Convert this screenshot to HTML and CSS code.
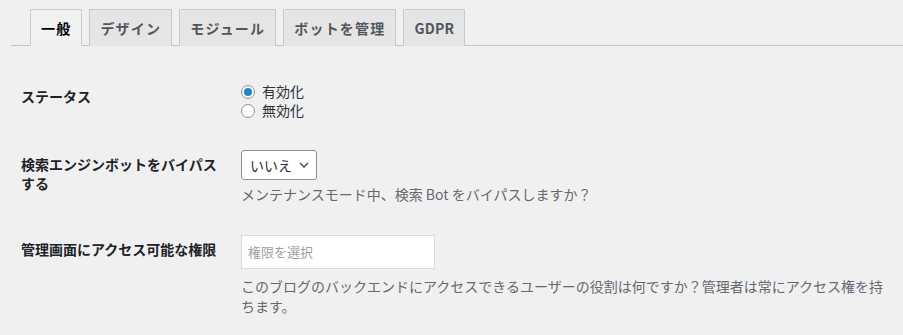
FILE: index.html
```html
<!DOCTYPE html>
<html>
  <head>
    <meta charset="utf-8">
    <title>メンテナンス設定</title>
    <link rel="stylesheet" href="styles.css">
  </head>

  <body>
    <nav class="nav-tab-wrapper">
      <a class="nav-tab nav-tab-active" href="#">一般</a>
      <a class="nav-tab" href="#">デザイン</a>
      <a class="nav-tab" href="#">モジュール</a>
      <a class="nav-tab" href="#">ボットを管理</a>
      <a class="nav-tab nav-tab-latin" href="#">GDPR</a>
    </nav>

    <table class="form-table">
      <tr>
        <th>ステータス</th>
        <td>
          <label class="radio-row"><span class="radio checked"></span>有効化</label>
          <label class="radio-row"><span class="radio"></span>無効化</label>
        </td>
      </tr>
      <tr>
        <th>検索エンジンボットをバイパスする</th>
        <td>
          <div class="select">
            <span>いいえ</span>
            <svg width="10" height="6" viewBox="0 0 10 6"><path d="M1 1l4 4 4-4" fill="none" stroke="#50575e" stroke-width="1.6"/></svg>
          </div>
          <p class="description">メンテナンスモード中、検索 Bot をバイパスしますか？</p>
        </td>
      </tr>
      <tr>
        <th>管理画面にアクセス可能な権限</th>
        <td>
          <div class="role-input">権限を選択</div>
          <p class="description desc-wide">このブログのバックエンドにアクセスできるユーザーの役割は何ですか？管理者は常にアクセス権を持ちます。</p>
        </td>
      </tr>
    </table>
  </body>

</html>
```

FILE: styles.css
```css
body {
  margin: 0;
  background-color: #f0f0f1;
  color: #1d2327;
  font-family: "Noto Sans CJK JP", "Noto Sans", sans-serif;
  font-size: 14px;
}

.nav-tab-wrapper {
  display: flex;
  margin-left: 11px;
  padding: 9px 0 0 12px;
  border-bottom: 1px solid #c3c4c7;
}

.nav-tab {
  margin-left: 7px;
  margin-bottom: -1px;
  padding: 6px 10px;
  line-height: 24px;
  font-size: 14px;
  font-weight: 700;
  letter-spacing: 1.2px;
  color: #50575e;
  text-decoration: none;
  background: #e5e5e5;
  border: 1px solid #c9c9c9;
  border-bottom: none;
}

.nav-tab-latin {
  letter-spacing: 0.2px;
}

.nav-tab-active {
  background: #f1f1f1;
  color: #000;
  border-bottom: 1px solid #f1f1f1;
  padding-bottom: 5px;
}

.form-table {
  margin: 21px 0 0 21px;
  width: 880px;
  border-collapse: collapse;
}

.form-table th {
  width: 200px;
  padding: 20px 10px 20px 0;
  text-align: left;
  vertical-align: top;
  line-height: 19px;
  font-weight: 700;
  color: #1d2327;
}

.form-table td {
  padding: 15px 10px;
  vertical-align: top;
}

.radio-row {
  display: flex;
  align-items: center;
  line-height: 19px;
  color: #2c3338;
}

.radio {
  width: 14px;
  height: 14px;
  margin-right: 7px;
  border: 1px solid #8c8f94;
  border-radius: 50%;
  background: #fff;
  box-sizing: border-box;
  display: flex;
  align-items: center;
  justify-content: center;
}

.radio.checked::after {
  content: "";
  width: 8px;
  height: 8px;
  border-radius: 50%;
  background: #2184c4;
}

.select {
  display: inline-flex;
  align-items: center;
  gap: 7px;
  height: 30px;
  width: 76px;
  padding: 0 0 0 8px;
  box-sizing: border-box;
  border: 1px solid #8c8f94;
  border-radius: 3px;
  background: #fff;
  color: #2c3338;
}

.description {
  margin: 4px 0 0;
  line-height: 21px;
  color: #646970;
}

.role-input {
  width: 194px;
  height: 34px;
  box-sizing: border-box;
  padding: 0 6px;
  line-height: 32px;
  font-size: 13px;
  color: #a0a0a0;
  background: #fff;
  border: 1px solid #dcdcde;
}

.desc-wide {
  margin-top: 7px;
  line-height: 20px;
}
```
